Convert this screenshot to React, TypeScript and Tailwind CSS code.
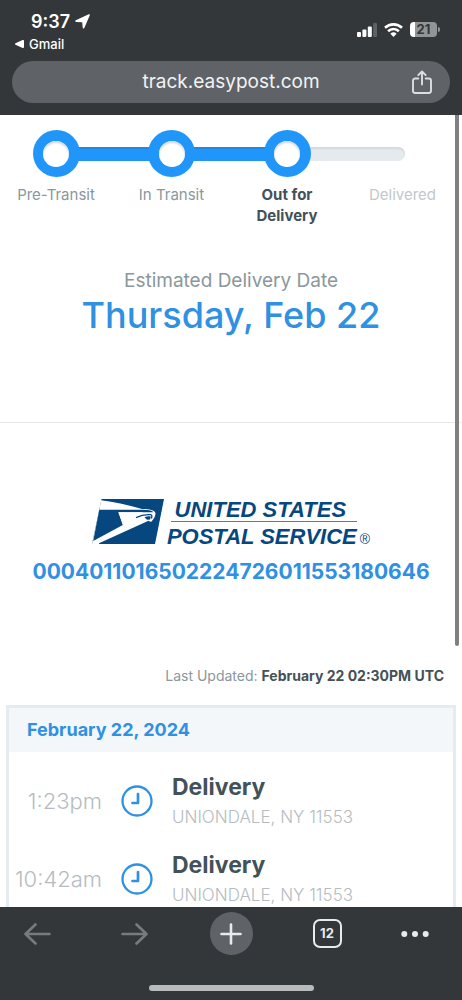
import React from "react";

type StepState = "done" | "current" | "pending";

const steps: { label: string; state: StepState }[] = [
  { label: "Pre-Transit", state: "done" },
  { label: "In Transit", state: "done" },
  { label: "Out for Delivery", state: "current" },
  { label: "Delivered", state: "pending" },
];

const labelStyles: Record<StepState, string> = {
  done: "text-[#8a979c]",
  current: "font-bold text-[#435158]",
  pending: "text-[#c1c8cc]",
};

const events = [
  { time: "1:23pm", title: "Delivery", place: "UNIONDALE, NY 11553" },
  { time: "10:42am", title: "Delivery", place: "UNIONDALE, NY 11553" },
];

function StatusBar() {
  return (
    <div className="flex h-[61px] items-start justify-between pr-[22px] pl-[15px]">
      <div className="pt-[10px]">
        <div className="flex items-center gap-[5px] pl-[16px] text-[18px] leading-[23px] font-semibold">
          <span>9:37</span>
          <svg className="size-[15px]" viewBox="0 0 15 15" fill="currentColor" aria-hidden="true">
            <path d="M14.800 1.300 9.300 14c-.4.900-1.500.7-1.600-.2L7.200 8.300 1.100 7.900C.1 7.800-.1 6.700.8 6.300L13.700.2c.8-.3 1.400.4 1.100 1.100Z" />
          </svg>
        </div>
        <a href="#gmail" className="flex items-center gap-[5px] text-[13px] leading-[22px] font-medium">
          <svg className="h-[8px] w-[9px]" viewBox="0 0 9 8" fill="currentColor" aria-hidden="true">
            <path d="M.5 3.300 7.600.1C8.500-.2 9 .1 9 .9v6.200c0 .8-.5 1.100-1.400.8L.5 4.700c-.6-.3-.6-1.100 0-1.400Z" />
          </svg>
          Gmail
        </a>
      </div>
      <div className="flex items-center gap-[7px] pt-[22px]">
        <svg className="h-[14px] w-[20px]" viewBox="0 0 20 14" fill="currentColor" aria-hidden="true">
          <rect x="0" y="9" width="4" height="5" rx="1" />
          <rect x="5.400" y="6.500" width="4" height="7.500" rx="1" />
          <rect x="10.800" y="3.500" width="4" height="10.500" rx="1" />
          <rect x="16.200" y="0" width="3.800" height="14" rx="1" opacity=".22" />
        </svg>
        <svg className="h-[14px] w-[19px]" viewBox="0 0 19 14" fill="none" stroke="currentColor" strokeWidth="2.600" aria-hidden="true">
          <path d="M1 4.800a12.200 12.200 0 0 1 17 0" />
          <path d="M4.100 8.200a7.800 7.800 0 0 1 10.800 0" />
          <path d="M9.500 14 6.400 10.800a4.500 4.500 0 0 1 6.200 0Z" fill="currentColor" stroke="none" />
        </svg>
        <div className="flex items-center gap-px">
          <div className="flex h-[15px] w-[27px] items-center justify-center rounded-[4px] bg-linear-to-r from-white from-20% to-[#929496] to-20% text-[13px] leading-[15px] font-bold text-[#343739]">
            21
          </div>
          <div className="h-[5px] w-[2px] rounded-r-full bg-[#929496]" />
        </div>
      </div>
    </div>
  );
}

function AddressBar() {
  return (
    <div className="mx-3 mb-3 grid h-[42px] grid-cols-[40px_1fr_40px] items-center rounded-full bg-[#5f6367] px-2">
      <a href="#address" className="col-start-2 text-center text-[19px] leading-6 text-[#f1f3f4]">
        track.easypost.com
      </a>
      <button type="button" aria-label="Share" className="flex justify-center">
        <svg className="h-[24px] w-[20px] text-[#dcdfe2]" viewBox="0 0 20 24" fill="none" stroke="currentColor" strokeWidth="1.900" strokeLinecap="round" strokeLinejoin="round" aria-hidden="true">
          <path d="M6.300 8.500H3.200C1.900 8.500 1 9.400 1 10.700v10.100C1 22.100 1.900 23 3.200 23h13.600c1.300 0 2.200-.9 2.200-2.200V10.700c0-1.300-.9-2.200-2.200-2.200h-3.100" />
          <path d="M10 14.500V1.500M6.300 5.200 10 1.500l3.700 3.700" />
        </svg>
      </button>
    </div>
  );
}

function ProgressTracker() {
  return (
    <section className="grid pt-[15px]">
      <div className="col-start-1 row-start-1 mt-[17px] mr-[57px] ml-[56px] h-[14px] rounded-full bg-[#e4eaed] shadow-[inset_0_2px_2px_#d3d8dc]">
        <div className="h-full w-2/3 bg-[#2196fa] shadow-[inset_0_2px_1px_#2188dc]" />
      </div>
      <ol className="col-start-1 row-start-1 grid grid-cols-[112fr_119fr_112fr_119fr]">
        {steps.map((step) => (
          <li key={step.label} className="flex flex-col items-center">
            <div className="h-[54px]">
              {step.state !== "pending" && (
                <div className="flex size-[47px] items-center justify-center rounded-full bg-[#2196fa]">
                  <div className="size-[26px] rounded-full bg-white shadow-[inset_0_2px_2px_#d3d8dc]" />
                </div>
              )}
            </div>
            <span className={`w-[80px] text-center text-[15px] leading-[21px] ${labelStyles[step.state]}`}>
              {step.label}
            </span>
          </li>
        ))}
      </ol>
    </section>
  );
}

function UspsLogo() {
  return (
    <div className="flex items-start justify-center gap-[3px] text-[#07477f]">
      <svg className="h-[45px] w-[72px] shrink-0" viewBox="0 0 72 45" aria-hidden="true">
        <path fill="#07477f" d="M9.500 0H72L63 45H0Z" />
        <path fill="#fff" d="M9 1.200C22 2.700 37 6 50 10c8 .2 12.700 1 13.400 4 .5 2.800-1.700 6.500-4.400 9L56.500 21.800 7 44.200V45H0l7.300-34.300Z" />
        <path fill="#07477f" d="M7.300 10.800H49.500c6 .2 10.500.3 11.800 2.400H26.500L30.800 26 1.200 42Z" />
        <path fill="#fff" d="M26.300 13.200H51c-1 1.200-2.400 2-4.800 2.700-1.700.6-2.600 2.500-3.700 4.200L31 25.800Z" />
        <path fill="none" stroke="#07477f" strokeWidth="1.300" d="M44 18.700c4.500-2.300 9-3.300 14.300-3 2 .3 1.700 1.600 1.200 3.800" />
        <path fill="#07477f" d="M52.500 18.200c2.700-.8 4.300-1 6.200-.7l-.5 3-3.200.2Z" />
      </svg>
      <div className="font-['Liberation_Sans',Arial,sans-serif] text-[22px] leading-[22px] font-bold whitespace-nowrap italic">
        <div className="pr-[3px]">UNITED STATES</div>
        <div className="ml-[4px] h-px bg-[#dc4a48]" />
        <div className="mt-[4px]">POSTAL SERVICE</div>
      </div>
      <span className="mt-[32px] font-['Liberation_Sans',Arial,sans-serif] text-[14px] leading-4">®</span>
    </div>
  );
}

function ClockIcon() {
  return (
    <svg className="size-8" viewBox="0 0 32 32" fill="none" stroke="#3090e2" aria-hidden="true">
      <circle cx="16" cy="16" r="14.500" strokeWidth="2.300" />
      <path d="M17 9v9h-5.500" strokeWidth="2.700" strokeLinecap="round" strokeLinejoin="round" />
    </svg>
  );
}

function History() {
  return (
    <section className="mr-[6px] ml-[6px] border-[3px] border-b-0 border-[#e5ebef]">
      <h2 className="bg-[#f3f7f9] pl-[18px] text-[18px] leading-[44px] font-bold text-[#3090e2]">
        February 22, 2024
      </h2>
      <ul className="pt-[10px]">
        {events.map((event) => (
          <li key={event.time} className="grid h-[78px] grid-cols-[93px_70px_1fr] items-center">
            <time className="text-right text-[22px] font-light text-[#b5bcc1]">{event.time}</time>
            <div className="flex justify-center">
              <ClockIcon />
            </div>
            <div>
              <h3 className="text-[23px] leading-[32px] font-bold text-[#435158]">{event.title}</h3>
              <p className="text-[17px] leading-[28px] font-light text-[#b5bcc1]">{event.place}</p>
            </div>
          </li>
        ))}
      </ul>
    </section>
  );
}

function ArrowIcon({ path }: { path: string }) {
  return (
    <svg className="h-[22px] w-[27px]" viewBox="0 0 27 22" fill="none" stroke="currentColor" strokeWidth="2.600" strokeLinecap="round" strokeLinejoin="round" aria-hidden="true">
      <path d={path} />
    </svg>
  );
}

function BottomBar() {
  return (
    <footer className="shrink-0 bg-[#34373a] text-[#e8eaed]">
      <nav className="grid h-[53px] grid-cols-[75fr_118fr_76fr_116fr_60fr] items-center justify-items-center pr-[17px]">
        <button type="button" aria-label="Back" className="text-[#787b7e]">
          <ArrowIcon path="M25.500 11H1.500M11.500 1.500 1.500 11l10 9.500" />
        </button>
        <button type="button" aria-label="Forward" className="text-[#787b7e]">
          <ArrowIcon path="M1.500 11h24M15.500 1.500l10 9.500-10 9.500" />
        </button>
        <button type="button" aria-label="New tab" className="flex size-[43px] items-center justify-center rounded-full bg-[#5f6367]">
          <svg className="size-[22px]" viewBox="0 0 22 22" fill="none" stroke="currentColor" strokeWidth="2.600" strokeLinecap="round" aria-hidden="true">
            <path d="M11 1.500v19M1.500 11h19" />
          </svg>
        </button>
        <button type="button" aria-label="Show 12 tabs" className="size-[29px] rounded-[7px] border-2 border-current text-[13px] leading-[25px] font-bold">
          12
        </button>
        <button type="button" aria-label="More">
          <svg className="h-[6px] w-[28px]" viewBox="0 0 28 6" fill="currentColor" aria-hidden="true">
            <circle cx="3.300" cy="3" r="3" />
            <circle cx="14" cy="3" r="3" />
            <circle cx="24.700" cy="3" r="3" />
          </svg>
        </button>
      </nav>
      <div className="flex h-[40px] items-end justify-center pb-[9px]">
        <div className="h-[6px] w-[165px] rounded-full bg-[#b9babc]" />
      </div>
    </footer>
  );
}

export default function App() {
  return (
    <div className="flex h-screen flex-col overflow-hidden bg-white font-['Inter','Liberation_Sans',sans-serif]">
      <header className="shrink-0 bg-[#34373a] text-white">
        <StatusBar />
        <AddressBar />
      </header>
      <main className="relative min-h-0 flex-1 overflow-hidden">
        <ProgressTracker />
        <section className="border-b border-[#e5e9eb] pt-[43px] pb-[85px] text-center">
          <p className="text-[19px] leading-6 text-[#8a979c]">Estimated Delivery Date</p>
          <h1 className="text-[36px] leading-[44px] font-medium text-[#3090e2]">Thursday, Feb 22</h1>
        </section>
        <section className="pt-[76px] text-center">
          <UspsLogo />
          <a href="#tracking" className="mt-[8px] block text-[21px] leading-8 font-bold text-[#3090e2]">
            0004011016502224726011553180646
          </a>
        </section>
        <p className="pt-[77px] pr-[18px] pb-[18px] text-right text-[14px] leading-[22px] text-[#8a979c]">
          Last Updated: <strong className="font-bold text-[#435158]">February 22 02:30PM UTC</strong>
        </p>
        <History />
        <div className="absolute top-0 right-[3px] h-[67%] w-[4px] rounded-b-full bg-[#808080]" />
      </main>
      <BottomBar />
    </div>
  );
}
